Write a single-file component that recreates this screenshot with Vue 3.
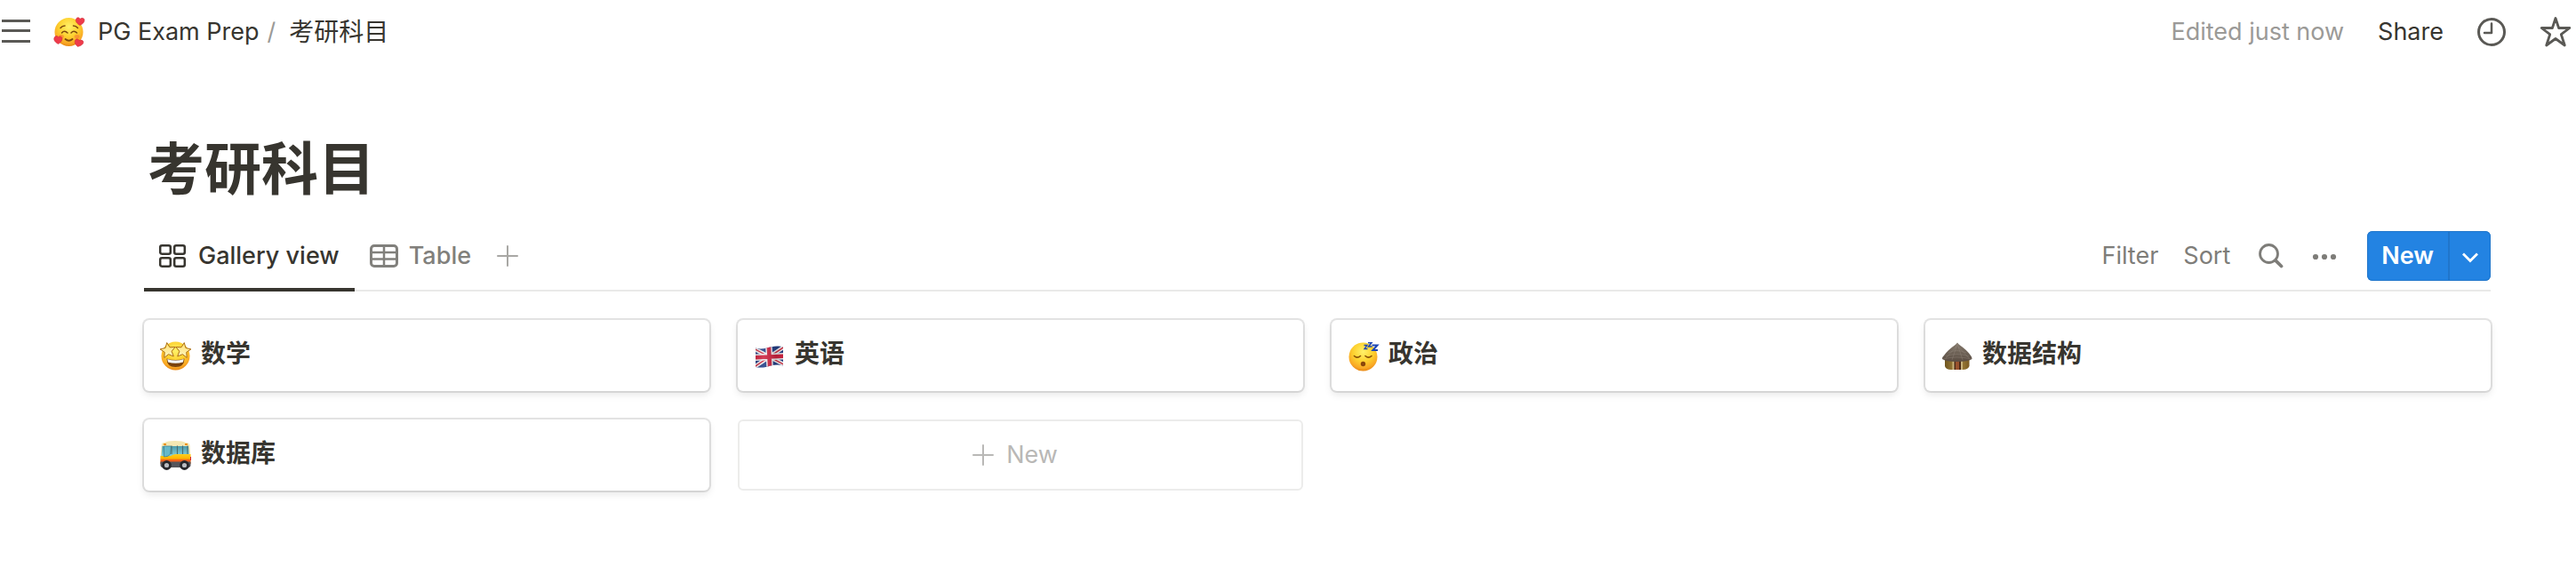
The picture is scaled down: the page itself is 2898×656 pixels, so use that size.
<script setup>
const cards = [
  { icon: 'star-eyes', title: '数学' },
  { icon: 'flag', title: '英语' },
  { icon: 'sleepy', title: '政治' },
  { icon: 'hut', title: '数据结构' },
  { icon: 'bus', title: '数据库' },
]
</script>

<template>
  <div class="page">
    <svg class="defs" width="0" height="0" aria-hidden="true">
      <defs>
        <radialGradient id="face" cx="50%" cy="32%" r="70%">
          <stop offset="0" stop-color="#fff16a" />
          <stop offset="0.5" stop-color="#fdd12f" />
          <stop offset="0.82" stop-color="#f9a825" />
          <stop offset="1" stop-color="#e5820f" />
        </radialGradient>
        <linearGradient id="thatch" x1="0" y1="0" x2="0" y2="1">
          <stop offset="0" stop-color="#84796c" />
          <stop offset="1" stop-color="#5a4d43" />
        </linearGradient>
        <linearGradient id="clay" x1="0" y1="0" x2="1" y2="0">
          <stop offset="0" stop-color="#6f551f" />
          <stop offset="0.5" stop-color="#a98a43" />
          <stop offset="1" stop-color="#7c5d24" />
        </linearGradient>
        <linearGradient id="glass" x1="0" y1="0" x2="0" y2="1">
          <stop offset="0" stop-color="#4d9cab" />
          <stop offset="1" stop-color="#86d3de" />
        </linearGradient>
        <linearGradient id="paint" x1="0" y1="0" x2="0" y2="1">
          <stop offset="0" stop-color="#ffcf1d" />
          <stop offset="0.45" stop-color="#ffb400" />
          <stop offset="0.6" stop-color="#f4631c" />
          <stop offset="1" stop-color="#e8501a" />
        </linearGradient>
        <linearGradient id="starfill" x1="0" y1="0" x2="0" y2="1">
          <stop offset="0" stop-color="#ffdf6b" />
          <stop offset="1" stop-color="#fff6c4" />
        </linearGradient>
        <linearGradient id="cloth" x1="0" y1="0" x2="1" y2="0">
          <stop offset="0" stop-color="#000" stop-opacity="0.12" />
          <stop offset="0.3" stop-color="#fff" stop-opacity="0.12" />
          <stop offset="0.7" stop-color="#000" stop-opacity="0.14" />
          <stop offset="1" stop-color="#000" stop-opacity="0" />
        </linearGradient>
        <clipPath id="flagshape">
          <path d="M2 9.500C9 12 14 9.500 19 8.500S29 7 33 8.500V29.500C29 28 24 28 19 29.500S9 32.500 2 31Z" />
        </clipPath>
      </defs>
    </svg>

    <header class="topbar">
      <button class="plain" aria-label="Open sidebar">
        <svg width="32" height="32" viewBox="0 0 32 32" fill="#5a5955">
          <path d="M0 2h32v3H0zM0 13h32v3H0zM0 25h32v3H0z" />
        </svg>
      </button>
      <nav class="crumbs" aria-label="Breadcrumb">
        <a class="crumb" href="#">
          <svg width="36" height="36" viewBox="0 0 36 36">
            <circle cx="17.500" cy="18" r="16" fill="url(#face)" />
            <g fill="none" stroke="#7d4a0e" stroke-width="1.500" stroke-linecap="round">
              <path d="M9.500 19q3-3.500 6.500 0M20 19q3-3.500 6.500 0" />
              <path d="M8 13.500q2-2.500 5-2.500M22.500 11q3 0 5 2.500" />
              <path d="M13.500 26q4 3.500 8 0" stroke-width="1.800" />
            </g>
            <ellipse cx="9" cy="23" rx="3" ry="2" fill="#f77b36" opacity=".6" />
            <ellipse cx="26.500" cy="23" rx="3" ry="2" fill="#f77b36" opacity=".6" />
            <g fill="#ee3b4b" stroke="#c7262f" stroke-width=".5">
              <path d="M30 10.500C26.500 8.500 24.500 6 25.500 3.500s4-2 4.500 0c1.500-1.800 4.800-1.500 5 1S33 9 30 10.500Z" />
              <path d="M5.500 31.500C2 29.500 0 27 1 24.500s4-2.500 4.500-.5c1.500-2 4.500-1 4.500 1.500s-2 4.500-4.500 6Z" />
              <path d="M27.500 34.500C25 32.500 23.500 30 24.500 27.500s4-2 4.500.3c1.500-1.300 4.800-.8 4.800 1.700s-3 4-6.300 5Z" />
            </g>
          </svg>
          <span>PG Exam Prep</span>
        </a>
        <span class="slash">/</span>
        <a class="crumb current" href="#" aria-current="page">考研科目</a>
      </nav>
      <div class="actions">
        <span class="edited">Edited just now</span>
        <button class="plain">Share</button>
        <button class="plain" aria-label="Updates">
          <svg width="32" height="32" viewBox="0 0 32 32" fill="none" stroke="#5a5955" stroke-width="3">
            <circle cx="16" cy="16" r="14.500" />
            <path d="M16 6.500V17H8" stroke-width="2.500" stroke-linecap="round" stroke-linejoin="round" />
          </svg>
        </button>
        <button class="plain" aria-label="Favorite">
          <svg width="36" height="36" viewBox="0 0 36 36" fill="none" stroke="#5a5955" stroke-width="2.800" stroke-linejoin="round">
            <path d="M18 2.500L21.600 13.500H33.800L24.300 20.700L28.300 33L18 25.500L7.700 33L11.700 20.700L2.200 13.500H14.400Z" />
          </svg>
        </button>
      </div>
    </header>

    <main class="content">
      <h1 class="title">考研科目</h1>

      <div class="viewbar">
        <div class="tabs" role="tablist">
          <button class="tab active" role="tab" aria-selected="true">
            <svg width="32" height="32" viewBox="0 0 32 32" fill="none" stroke="#37352f" stroke-width="2.500">
              <rect x="1.200" y="4.200" width="11.600" height="9.600" rx="2" />
              <rect x="17.200" y="4.200" width="11.600" height="9.600" rx="2" />
              <rect x="1.200" y="18.200" width="11.600" height="9.600" rx="2" />
              <rect x="17.200" y="18.200" width="11.600" height="9.600" rx="2" />
            </svg>
            Gallery view
          </button>
          <button class="tab" role="tab" aria-selected="false">
            <svg width="32" height="32" viewBox="0 0 32 32" fill="none" stroke="#81807c" stroke-width="3">
              <rect x="1.500" y="4.500" width="29" height="23" rx="3.500" />
              <path d="M2 12H30M2 19.500H30M16 5V27" stroke-width="2.500" />
            </svg>
            Table
          </button>
          <button class="plain add" aria-label="Add view">
            <svg width="24" height="24" viewBox="0 0 24 24" stroke="#a8a7a4" stroke-width="2" stroke-linecap="round">
              <path d="M12 1V23M1 12H23" />
            </svg>
          </button>
        </div>

        <div class="tools">
          <div class="filters">
            <button class="plain">Filter</button>
            <button class="plain">Sort</button>
          </div>
          <button class="plain" aria-label="Search">
            <svg width="28" height="28" viewBox="0 0 28 28" fill="none" stroke="#7e7d79" stroke-linecap="round">
              <circle cx="11.500" cy="11.500" r="10" stroke-width="2.800" />
              <path d="M19.300 19.300L25.500 25.500" stroke-width="3.800" />
            </svg>
          </button>
          <button class="plain" aria-label="More options">
            <svg width="28" height="28" viewBox="0 0 28 28" fill="#7e7d79">
              <circle cx="4" cy="15" r="3.100" />
              <circle cx="14" cy="15" r="3.100" />
              <circle cx="24" cy="15" r="3.100" />
            </svg>
          </button>
          <div class="create">
            <button class="create-main">New</button>
            <button class="create-more" aria-label="Templates">
              <svg width="20" height="20" viewBox="0 0 20 20" fill="none" stroke="#fff" stroke-width="2.800">
                <path d="M2 7.500L10 15.500L18 7.500" />
              </svg>
            </button>
          </div>
        </div>
      </div>

      <div class="gallery">
        <a v-for="card in cards" :key="card.title" class="card" href="#">
          <svg v-if="card.icon === 'star-eyes'" width="36" height="36" viewBox="0 0 36 36">
            <circle cx="17.500" cy="18.500" r="16" fill="url(#face)" />
            <path d="M7.500 21.500Q17.500 24.500 27.500 21.500Q27.500 31 17.500 31T7.500 21.500Z" fill="#7a420b" />
            <path d="M8.300 22Q17.500 25 26.700 22L26 25.500Q17.500 28 9 25.500Z" fill="#f3f5f7" />
            <g fill="url(#starfill)" stroke="#a8690f" stroke-width=".9" stroke-linejoin="round">
              <path transform="translate(9 12.500) rotate(-8)" d="M0-9L2.500-3.400L8.600-2.800L4 1.300L5.300 7.300L0 4.200L-5.300 7.300L-4 1.300L-8.600-2.800L-2.500-3.400Z" />
              <path transform="translate(26 12.500) rotate(8)" d="M0-9L2.500-3.400L8.600-2.800L4 1.300L5.300 7.300L0 4.200L-5.300 7.300L-4 1.300L-8.600-2.800L-2.500-3.400Z" />
            </g>
          </svg>
          <svg v-else-if="card.icon === 'flag'" width="36" height="36" viewBox="0 0 36 36">
            <g clip-path="url(#flagshape)">
              <path d="M0 0H36V36H0Z" fill="#233f87" />
              <g transform="rotate(-3 17.500 19.500)">
                <path d="M0 9L35 30M0 30L35 9" stroke="#f1eef0" stroke-width="4.600" />
                <path d="M0 9L35 30M0 30L35 9" stroke="#cf2b40" stroke-width="1.500" />
                <path d="M17.500 0V36M-2 19.500H38" stroke="#f1eef0" stroke-width="7.500" />
                <path d="M17.500 0V36M-2 19.500H38" stroke="#cf2340" stroke-width="4.600" />
              </g>
              <path d="M0 0H36V36H0Z" fill="url(#cloth)" />
            </g>
          </svg>
          <svg v-else-if="card.icon === 'sleepy'" width="36" height="36" viewBox="0 0 36 36">
            <circle cx="17.500" cy="19.500" r="16" fill="url(#face)" />
            <g fill="none" stroke="#8a5208" stroke-width="1.600" stroke-linecap="round">
              <path d="M7.500 18.500q3.500 3.200 7 0M20 18.500q3.500 3.200 7 0" />
            </g>
            <ellipse cx="17.500" cy="27.500" rx="2.700" ry="2.700" fill="#8b480c" />
            <g fill="none" stroke="#1d46b5">
              <path d="M18.500 6.500H22L19 10.500H22.500" stroke-width="1.300" />
              <path d="M23 3.800H27L23.500 8H27.500" stroke-width="1.500" />
              <path d="M27.500 6.500H33.500L28.500 12H34" stroke-width="2" />
            </g>
          </svg>
          <svg v-else-if="card.icon === 'hut'" width="36" height="36" viewBox="0 0 36 36">
            <path d="M4 21H31.500V30Q30 34 24 34H11Q5 34 4 30Z" fill="url(#clay)" />
            <path d="M13 24H24V34H13Z" fill="#4b2a18" />
            <path d="M12.500 24H14.500V34H12.500ZM22 24H24V34H22Z" fill="#c8b27b" />
            <path d="M16 24H20V34H16Z" fill="#98522d" />
            <path d="M18 3.500Q19 5 21 6.500Q29 12 33 18Q35 20.500 34.500 22Q30 25 17.500 25T1 22Q.5 20 3 18Q7 12 15 6.500Q17 5 18 3.500Z" fill="url(#thatch)" />
            <path d="M8 15Q17 10 28 15M5 19Q17 14 31 19M2 22Q17 18 34 22M18 5L12 23M18 5L24 23M17 8L5 21M19 8L31 21" fill="none" stroke="#a1978b" stroke-width=".5" opacity=".55" />
          </svg>
          <svg v-else width="36" height="36" viewBox="0 0 36 36">
            <path d="M2 6Q2 4 5 4Q8 2 17 2T29 4Q33 4 33.500 7L34.500 20V28H.500V20Z" fill="#f4e7b2" />
            <path d="M2.500 8H32L33 20H1.500Z" fill="url(#glass)" />
            <path d="M.500 19H12Q15 17 18 17H34.500V28H.500Z" fill="url(#paint)" />
            <path d="M4.500 8H12.500L11.500 17Q10 20 4.500 20Z" fill="#67b9c8" stroke="#367b8c" stroke-width=".7" />
            <path d="M13 7.500V17M19.500 7.500V17M25.500 7.500V17M31 7.500V17" stroke="#496d70" stroke-width="1.100" />
            <path d="M4 5H7V7H4ZM28 5H31V7H28Z" fill="#ed9320" />
            <path d="M.500 25.500H34.500V30Q34 32 32 32H3Q1 32 .500 30Z" fill="#55555b" />
            <path d="M34 20H35V24H34Z" fill="#d3262e" />
            <g fill="#b9bbc0" stroke="#27272b" stroke-width="2.800">
              <circle cx="7.500" cy="29.500" r="4" />
              <circle cx="27.500" cy="29.500" r="4" />
            </g>
          </svg>
          <span class="card-title">{{ card.title }}</span>
        </a>
        <button class="card-new">
          <svg width="24" height="24" viewBox="0 0 24 24" stroke="#b9b8b6" stroke-width="2" stroke-linecap="round">
            <path d="M12 1V23M1 12H23" />
          </svg>
          New
        </button>
      </div>
    </main>
  </div>
</template>

<style>
body {
  margin: 0;
  background: #fff;
}
</style>

<style scoped>
.page {
  color: #37352f;
  font-family: Inter, "Noto Sans CJK SC", sans-serif;
  font-size: 27px;
  line-height: 36px;
}
.defs {
  display: block;
}
svg {
  display: block;
  flex: none;
}
button {
  border: 0;
  padding: 0;
  background: none;
  color: inherit;
  font: inherit;
  cursor: pointer;
}
a {
  color: inherit;
  text-decoration: none;
}
.topbar {
  display: flex;
  align-items: center;
  height: 72px;
  padding: 0 5px 0 2px;
}
.crumbs {
  display: flex;
  align-items: center;
  margin-left: 26px;
}
.crumb {
  display: flex;
  align-items: center;
  gap: 14px;
}
.crumb.current {
  font-size: 28px;
}
.slash {
  margin: 0 15px 0 9px;
  color: #9b9a97;
}
.actions {
  display: flex;
  align-items: center;
  gap: 38px;
  margin-left: auto;
}
.edited {
  color: #9b9a97;
}
.content {
  padding: 78px 96px 96px 162px;
}
.title {
  margin: 0 0 18px;
  padding-left: 4px;
  font-size: 64px;
  font-weight: 700;
  line-height: 80px;
}
.viewbar {
  display: flex;
  justify-content: space-between;
  height: 80px;
  box-shadow: inset 0 -2px #e9e9e8;
}
.tabs {
  display: flex;
}
.tab {
  display: flex;
  align-items: center;
  gap: 12px;
  padding: 0 17px;
  color: #81807c;
  font-weight: 500;
}
.tab.active {
  color: #37352f;
  box-shadow: inset 0 -4px #37352f;
}
.add {
  padding: 0 12px;
}
.tools {
  display: flex;
  align-items: center;
  gap: 32px;
  color: #7e7d79;
}
.filters {
  display: flex;
  gap: 28px;
}
.create {
  display: flex;
  height: 56px;
  margin-left: 2px;
  border-radius: 6px;
  overflow: hidden;
  background: #2383e2;
  box-shadow: inset 0 0 0 1px #2076cb;
  color: #fff;
  font-weight: 600;
}
.create-main {
  padding: 0 16px;
}
.create-more {
  padding: 0 13px;
  border-left: 2px solid #2076cb;
}
.gallery {
  display: grid;
  grid-template-columns: repeat(4, 1fr);
  gap: 32px;
  margin-top: 32px;
}
.card,
.card-new {
  display: flex;
  align-items: center;
  box-sizing: border-box;
  height: 80px;
  border-radius: 6px;
}
.card {
  gap: 10px;
  padding: 0 18px;
  background: #fff;
  box-shadow: 0 0 0 2px rgba(15, 15, 15, 0.11), 0 4px 8px rgba(15, 15, 15, 0.1);
}
.card-title {
  padding-bottom: 4px;
  font-size: 28px;
  font-weight: 600;
}
.card-new {
  justify-content: center;
  gap: 14px;
  padding-right: 12px;
  border: 2px solid #ececeb;
  color: #b9b8b6;
}
</style>
